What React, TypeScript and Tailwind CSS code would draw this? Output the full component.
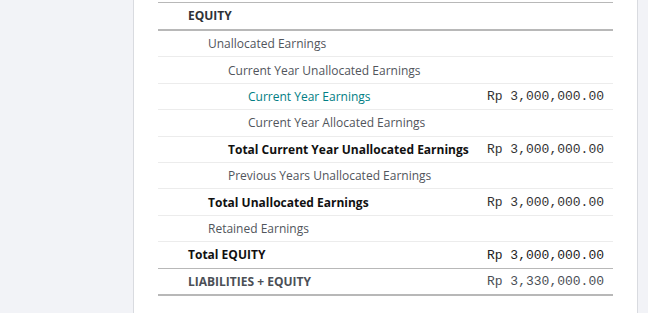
type Row = {
    label: string;
    level: number;
    amount?: string;
    kind?: "normal" | "link" | "total" | "grand";
};

const rows: Row[] = [
    { label: "Unallocated Earnings", level: 1 },
    { label: "Current Year Unallocated Earnings", level: 2 },
    { label: "Current Year Earnings", level: 3, amount: "Rp 3,000,000.00", kind: "link" },
    { label: "Current Year Allocated Earnings", level: 3 },
    { label: "Total Current Year Unallocated Earnings", level: 2, amount: "Rp 3,000,000.00", kind: "total" },
    { label: "Previous Years Unallocated Earnings", level: 2 },
    { label: "Total Unallocated Earnings", level: 1, amount: "Rp 3,000,000.00", kind: "total" },
    { label: "Retained Earnings", level: 1 },
];

const indent = ["pl-[30px]", "pl-[50px]", "pl-[70px]", "pl-[90px]"];

const mono = "font-['Courier_New','Nimbus_Mono_PS','FreeMono',Courier,monospace]";

function ReportRow({ row }: { row: Row }) {
    const labelColor =
        row.kind === "link"
            ? "text-[#017e84]"
            : row.kind === "total"
            ? "text-[#111111] font-bold"
            : "text-[#51555c]";
    return (
        <div className="flex items-center h-[26.4px] pt-px border-b border-[#ececec]">
            <div className={`flex-1 text-[12px] ${indent[row.level]} ${labelColor}`}>{row.label}</div>
            {row.amount && (
                <div className={`pr-[9px] text-[13px] text-[#333333] ${mono}`}>
                    {row.amount}
                </div>
            )}
        </div>
    );
}

export default function App() {
    return (
        <div className="w-[648px] h-[313px] bg-[#f2f3f7] flex font-['Open_Sans',sans-serif] overflow-hidden">
            <div className="ml-[133px] w-[505px] h-full bg-white border-x border-[#d9dbe0] px-[24px]">
                <div className="mt-[2px] border-t border-[#b8b8b8]">
                    <div className="flex items-center h-[28px] border-b-2 border-[#b8b8b8]">
                        <div className="pl-[30px] text-[12px] font-bold text-[#2f3237]">EQUITY</div>
                    </div>
                    {rows.map((r, i) => (
                        <ReportRow key={i} row={r} />
                    ))}
                    <div className="flex items-center h-[26.4px] pt-px border-b border-[#b8b8b8]">
                        <div className="flex-1 pl-[30px] text-[12px] font-bold text-[#111111]">Total EQUITY</div>
                        <div className={`pr-[9px] text-[13px] text-[#222222] ${mono}`}>
                            Rp 3,000,000.00
                        </div>
                    </div>
                    <div className="flex items-center h-[27.4px] pt-px border-b-2 border-[#b8b8b8]">
                        <div className="flex-1 pl-[30px] text-[12px] font-bold text-[#4b4f56]">LIABILITIES + EQUITY</div>
                        <div className={`pr-[9px] text-[13px] text-[#4b4f56] ${mono}`}>
                            Rp 3,330,000.00
                        </div>
                    </div>
                </div>
            </div>
        </div>
    );
}
